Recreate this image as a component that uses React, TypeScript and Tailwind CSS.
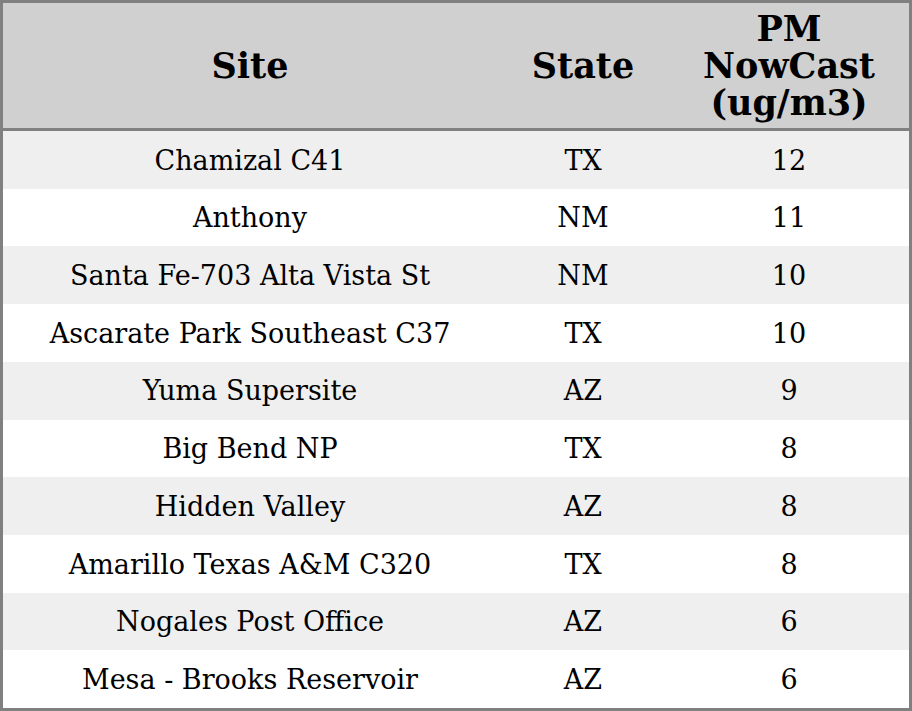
import React from 'react';

const rows: [string, string, number][] = [
  ['Chamizal C41', 'TX', 12],
  ['Anthony', 'NM', 11],
  ['Santa Fe-703 Alta Vista St', 'NM', 10],
  ['Ascarate Park Southeast C37', 'TX', 10],
  ['Yuma Supersite', 'AZ', 9],
  ['Big Bend NP', 'TX', 8],
  ['Hidden Valley', 'AZ', 8],
  ['Amarillo Texas A&M C320', 'TX', 8],
  ['Nogales Post Office', 'AZ', 6],
  ['Mesa - Brooks Reservoir', 'AZ', 6],
];

const App: React.FC = () => {
  return (
    <div className="w-[912px] h-[711px] bg-white font-['DejaVu_Serif',serif] text-black">
      <div className="border-[3px] border-[#808080] h-[711px] flex flex-col">
        <div className="flex h-[128px] bg-[#d0d0d0] border-b-[3px] border-[#808080] font-bold text-[35px] leading-[37px] items-center text-center shrink-0">
          <div className="w-[494px]">Site</div>
          <div className="w-[172px]">State</div>
          <div className="flex-1">
            PM
            <br />
            NowCast
            <br />
            (ug/m3)
          </div>
        </div>
        <div className="flex-1 flex flex-col text-[27px]">
          {rows.map(([site, state, val], i) => (
            <div
              key={i}
              className={`flex-1 flex items-center text-center pt-[2px] ${i % 2 === 0 ? 'bg-[#efefef]' : 'bg-white'}`}
            >
              <div className="w-[494px]">{site}</div>
              <div className="w-[172px]">{state}</div>
              <div className="flex-1">{val}</div>
            </div>
          ))}
        </div>
      </div>
    </div>
  );
};

export default App;
